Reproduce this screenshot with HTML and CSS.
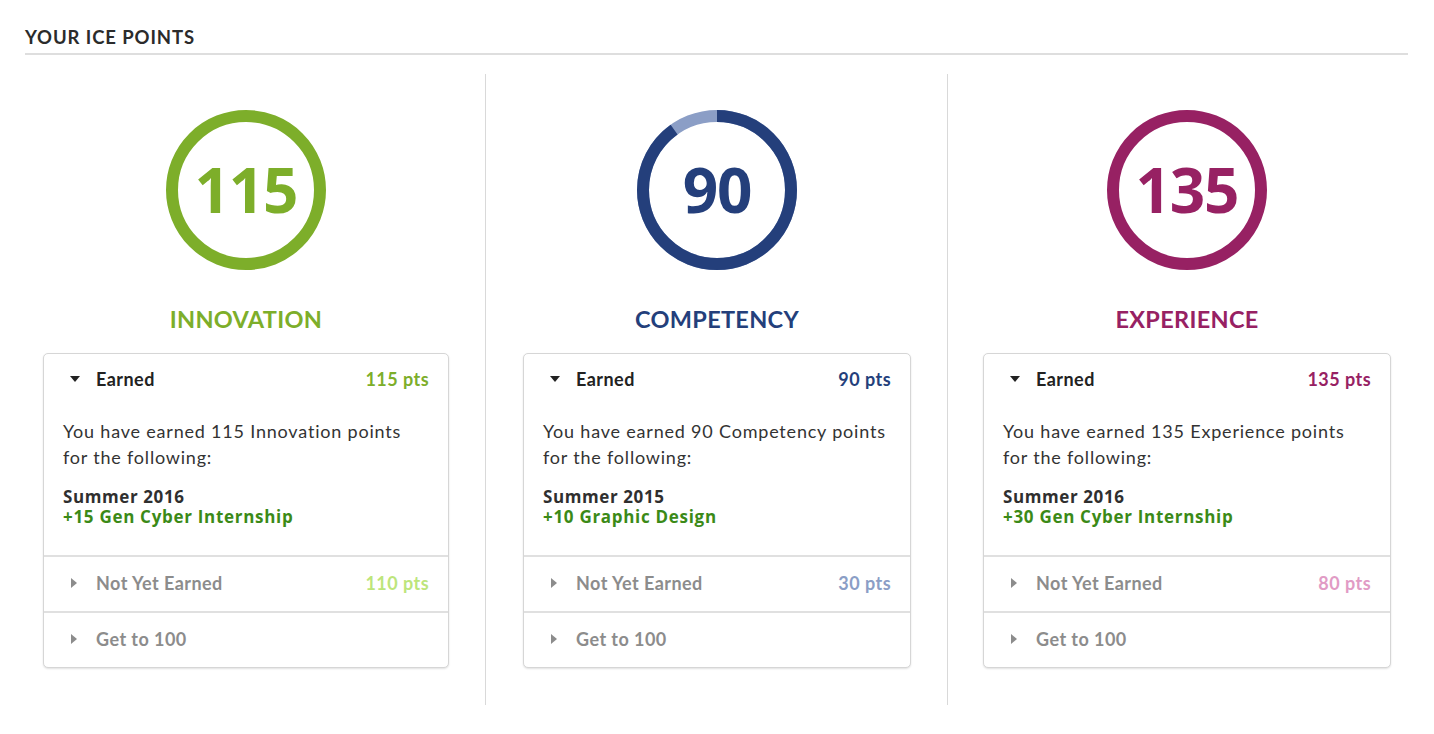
FILE: index.html
```html
<!DOCTYPE html>
<html>
<head>
<meta charset="utf-8">
<link rel="stylesheet" href="styles.css">
</head>
<body>
<div class="page">
  <h2 class="section-title">YOUR ICE POINTS</h2>
  <div class="columns">
    <div class="col col-1 innovation">
      <div class="ring">
        <svg viewBox="0 0 160 160" width="160" height="160">
          <circle cx="80" cy="80" r="74" class="arc-full"/>
        </svg>
        <span class="ring-num">115</span>
      </div>
      <div class="cat-title">INNOVATION</div>
      <div class="card">
        <div class="row row-open">
          <span class="caret-down"></span>
          <span class="row-label">Earned</span>
          <span class="pts">115 pts</span>
        </div>
        <div class="card-body">
          <p class="desc">You have earned 115 Innovation points for the following:</p>
          <div class="term">Summer 2016</div>
          <div class="item">+15 Gen Cyber Internship</div>
        </div>
        <div class="row row-closed">
          <span class="caret-right"></span>
          <span class="row-label">Not Yet Earned</span>
          <span class="pts pts-light">110 pts</span>
        </div>
        <div class="row row-closed">
          <span class="caret-right"></span>
          <span class="row-label">Get to 100</span>
        </div>
      </div>
    </div>
    <div class="col col-2 competency">
      <div class="ring">
        <svg viewBox="0 0 160 160" width="160" height="160">
          <circle cx="80" cy="80" r="74" class="arc-rest"/>
          <circle cx="80" cy="80" r="74" class="arc-part" stroke-dasharray="418.5 465" transform="rotate(-90 80 80)"/>
        </svg>
        <span class="ring-num">90</span>
      </div>
      <div class="cat-title">COMPETENCY</div>
      <div class="card">
        <div class="row row-open">
          <span class="caret-down"></span>
          <span class="row-label">Earned</span>
          <span class="pts">90 pts</span>
        </div>
        <div class="card-body">
          <p class="desc">You have earned 90 Competency points for the following:</p>
          <div class="term">Summer 2015</div>
          <div class="item">+10 Graphic Design</div>
        </div>
        <div class="row row-closed">
          <span class="caret-right"></span>
          <span class="row-label">Not Yet Earned</span>
          <span class="pts pts-light">30 pts</span>
        </div>
        <div class="row row-closed">
          <span class="caret-right"></span>
          <span class="row-label">Get to 100</span>
        </div>
      </div>
    </div>
    <div class="col col-3 experience">
      <div class="ring">
        <svg viewBox="0 0 160 160" width="160" height="160">
          <circle cx="80" cy="80" r="74" class="arc-full"/>
        </svg>
        <span class="ring-num">135</span>
      </div>
      <div class="cat-title">EXPERIENCE</div>
      <div class="card">
        <div class="row row-open">
          <span class="caret-down"></span>
          <span class="row-label">Earned</span>
          <span class="pts">135 pts</span>
        </div>
        <div class="card-body">
          <p class="desc">You have earned 135 Experience points for the following:</p>
          <div class="term">Summer 2016</div>
          <div class="item">+30 Gen Cyber Internship</div>
        </div>
        <div class="row row-closed">
          <span class="caret-right"></span>
          <span class="row-label">Not Yet Earned</span>
          <span class="pts pts-light">80 pts</span>
        </div>
        <div class="row row-closed">
          <span class="caret-right"></span>
          <span class="row-label">Get to 100</span>
        </div>
      </div>
    </div>
  </div>
</div>
</body>
</html>
```

FILE: styles.css
```css
* { box-sizing: border-box; }
html, body { margin: 0; padding: 0; background: #fff; }
body {
  font-family: Lato, "Open Sans", "Liberation Sans", sans-serif;
  color: #333;
}
.page {
  padding: 26px 26px 0 25px;
}
.section-title {
  margin: 0;
  font-family: Lato, sans-serif;
  font-size: 18.5px;
  line-height: 22px;
  font-weight: 700;
  letter-spacing: 0.9px;
  color: #2b2b2b;
  padding-bottom: 5px;
  border-bottom: 2px solid #dedede;
}
.columns {
  margin-top: 19px;
  display: grid;
  grid-template-columns: 460px 462px 461px;
}
.col {
  display: flex;
  flex-direction: column;
  align-items: stretch;
  padding-top: 36px;
  padding-bottom: 37px;
}
.col-1 { padding-left: 18px; padding-right: 36px; }
.col-2 { border-left: 1px solid #d9d9d9; padding-left: 37px; padding-right: 36px; }
.col-3 { border-left: 1px solid #d9d9d9; padding-left: 35px; padding-right: 17px; }

.innovation { --main: #7dae2a; --light: #bde57b; }
.competency { --main: #243f7b; --light: #8b9ec6; }
.experience { --main: #972163; --light: #e19bc5; }

.ring {
  position: relative;
  width: 160px;
  height: 160px;
  align-self: center;
}
.ring svg { display: block; }
.arc-full, .arc-part {
  fill: none;
  stroke: var(--main);
  stroke-width: 12;
}
.arc-rest {
  fill: none;
  stroke: #8b9ec6;
  stroke-width: 12;
}
.ring-num {
  position: absolute;
  left: 0; right: 0; top: 0; bottom: 0;
  display: flex;
  align-items: center;
  justify-content: center;
  font-family: "Open Sans", sans-serif;
  font-weight: 700;
  font-size: 62px;
  letter-spacing: -1.2px;
  color: var(--main);
  padding-bottom: 2px;
}
.cat-title {
  margin-top: 35px;
  text-align: center;
  font-family: Lato, sans-serif;
  font-weight: 700;
  font-size: 23.5px;
  line-height: 28px;
  letter-spacing: 0.3px;
  color: var(--main);
}
.card {
  margin-top: 20px;
  border: 1px solid #d6d6d6;
  border-radius: 5px;
  box-shadow: 0 1px 2px rgba(0,0,0,0.12);
  background: #fff;
}
.row {
  display: flex;
  align-items: center;
  padding: 0 19px 3px 26px;
  font-size: 18px;
  font-weight: 700;
  letter-spacing: 0.45px;
}
.row-open {
  height: 52px;
  color: #222;
}
.row-closed {
  height: 56px;
  border-top: 2px solid #e0e0e0;
  color: #8c8c8c;
}
.row-label { flex: 1; }
.caret-down {
  width: 0; height: 0;
  border-left: 5px solid transparent;
  border-right: 5px solid transparent;
  border-top: 6px solid #222;
  margin-right: 16px;
  margin-top: 1px;
}
.caret-right {
  width: 0; height: 0;
  border-top: 5px solid transparent;
  border-bottom: 5px solid transparent;
  border-left: 6px solid #8c8c8c;
  margin-left: 1px;
  margin-right: 19px;
}
.pts { color: var(--main); }
.pts-light { color: var(--light); }
.card-body {
  padding: 12px 20px 28px 19px;
}
.desc {
  margin: 0;
  font-size: 18px;
  line-height: 26px;
  font-weight: 400;
  letter-spacing: 0.8px;
  color: #333;
}
.term {
  margin-top: 17px;
  font-family: "Open Sans", sans-serif;
  font-weight: 700;
  font-size: 17px;
  line-height: 20px;
  letter-spacing: 0.6px;
  color: #2f2f2f;
}
.item {
  font-family: "Open Sans", sans-serif;
  font-weight: 700;
  font-size: 17px;
  line-height: 20px;
  letter-spacing: 0.7px;
  color: #3b8a17;
}
```
